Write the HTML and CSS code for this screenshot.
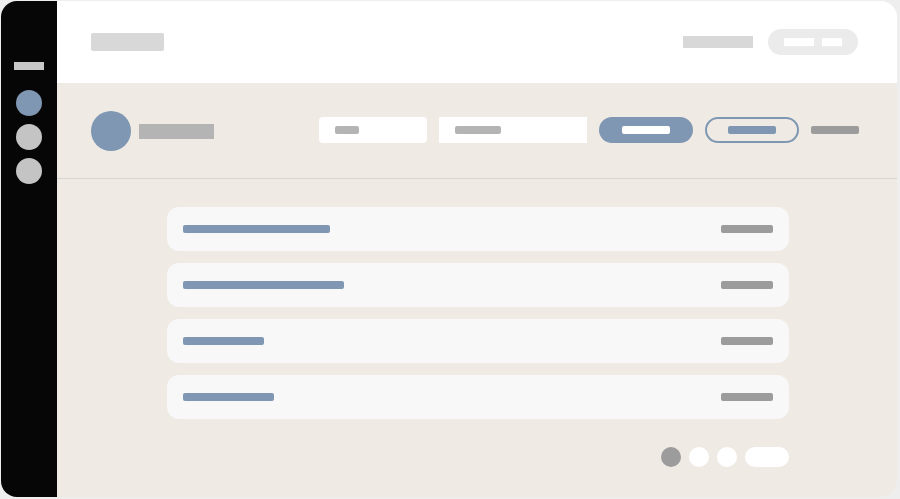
FILE: index.html
```html
<!DOCTYPE html>
<html lang="en">
<head>
  <meta charset="UTF-8">
  <meta name="viewport" content="width=device-width, initial-scale=1.0">
  <title>List Wireframe</title>
  <link rel="stylesheet" href="styles.css">
</head>
<body>
  <div class="frame">
    <!-- Left rail -->
    <nav class="sidebar">
      <div class="sidebar-mark"></div>
      <div class="nav-dots">
        <span class="nav-dot active"></span>
        <span class="nav-dot"></span>
        <span class="nav-dot"></span>
      </div>
    </nav>

    <div class="main">
      <header class="topbar">
        <div class="logo-block"></div>
        <div class="topbar-right">
          <div class="top-link"></div>
          <div class="account-pill">
            <span class="pill-bar wide"></span>
            <span class="pill-bar"></span>
          </div>
        </div>
      </header>

      <section class="toolbar">
        <div class="profile">
          <div class="avatar"></div>
          <div class="profile-name"></div>
        </div>
        <div class="controls">
          <div class="field small"><span class="ph short"></span></div>
          <div class="field large"><span class="ph"></span></div>
          <button class="btn primary" type="button"><span class="btn-bar"></span></button>
          <button class="btn outline" type="button"><span class="btn-bar"></span></button>
          <div class="ctrl-link"></div>
        </div>
      </section>

      <section class="content">
        <div class="list" id="list"></div>
        <div class="pager">
          <span class="page-dot current"></span>
          <span class="page-dot"></span>
          <span class="page-dot"></span>
          <span class="page-next"></span>
        </div>
      </section>
    </div>
  </div>

  <script>
    // title bar widths for each row
    const rows = [147, 161, 81, 91];
    const list = document.getElementById("list");
    rows.forEach((w) => {
      const row = document.createElement("div");
      row.className = "list-row";
      const title = document.createElement("span");
      title.className = "row-title";
      title.style.width = w + "px";
      const meta = document.createElement("span");
      meta.className = "row-meta";
      row.appendChild(title);
      row.appendChild(meta);
      list.appendChild(row);
    });
  </script>
</body>
</html>
```

FILE: styles.css
```css
* {
  box-sizing: border-box;
}

body {
  margin: 0;
  background-color: #eeeeee;
  font-family: 'Liberation Sans', Arial, sans-serif;
}

.frame {
  display: flex;
  width: 896px;
  height: 496px;
  margin: 1px 0 0 1px;
  border-radius: 16px;
  overflow: hidden;
  background-color: #efebe4;
}

/* sidebar */
.sidebar {
  width: 56px;
  flex-shrink: 0;
  background-color: #060606;
  display: flex;
  flex-direction: column;
  align-items: center;
  padding-top: 61px;
}

.sidebar-mark {
  width: 30px;
  height: 8px;
  background-color: #c8c8c8;
}

.nav-dots {
  display: flex;
  flex-direction: column;
  gap: 8px;
  margin-top: 20px;
}

.nav-dot {
  display: block;
  width: 26px;
  height: 26px;
  border-radius: 50%;
  background-color: #c4c4c4;
}

.nav-dot.active {
  background-color: #7f97b2;
}

/* main column */
.main {
  flex: 1;
  display: flex;
  flex-direction: column;
}

.topbar {
  height: 82px;
  background-color: #ffffff;
  display: flex;
  align-items: center;
  justify-content: space-between;
  padding: 0 39px 0 34px;
}

.logo-block {
  width: 73px;
  height: 18px;
  border-radius: 2px;
  background-color: #d8d8d8;
}

.topbar-right {
  display: flex;
  align-items: center;
  gap: 15px;
}

.top-link {
  width: 70px;
  height: 12px;
  background-color: #d8d8d8;
}

.account-pill {
  display: flex;
  align-items: center;
  gap: 8px;
  height: 26px;
  padding: 0 16px;
  border-radius: 13px;
  background-color: #ebebeb;
}

.pill-bar {
  width: 20px;
  height: 8px;
  background-color: #ffffff;
}

.pill-bar.wide {
  width: 30px;
}

/* toolbar */
.toolbar {
  height: 96px;
  display: flex;
  align-items: center;
  justify-content: space-between;
  padding: 0 38px 1px 34px;
  border-bottom: 1px solid #d6d6d6;
}

.profile {
  display: flex;
  align-items: center;
  gap: 8px;
  margin-top: 2px;
}

.avatar {
  width: 40px;
  height: 40px;
  border-radius: 50%;
  background-color: #7f97b2;
}

.profile-name {
  width: 75px;
  height: 15px;
  background-color: #b4b4b4;
}

.controls {
  display: flex;
  align-items: center;
  gap: 12px;
}

.field {
  height: 26px;
  background-color: #ffffff;
  display: flex;
  align-items: center;
  padding-left: 16px;
}

.field.small {
  width: 108px;
  border-radius: 4px;
}

.field.large {
  width: 148px;
}

.ph {
  width: 46px;
  height: 8px;
  border-radius: 2px;
  background-color: #b4b4b4;
}

.ph.short {
  width: 24px;
}

.btn {
  width: 94px;
  height: 26px;
  border-radius: 13px;
  display: flex;
  align-items: center;
  justify-content: center;
  padding: 0;
  cursor: pointer;
}

.btn.primary {
  background-color: #7f97b2;
  border: none;
}

.btn.outline {
  background-color: transparent;
  border: 2px solid #7f97b2;
}

.btn-bar {
  width: 48px;
  height: 8px;
  border-radius: 2px;
}

.primary .btn-bar {
  background-color: #ffffff;
}

.outline .btn-bar {
  background-color: #7f97b2;
}

.ctrl-link {
  width: 48px;
  height: 8px;
  border-radius: 2px;
  background-color: #9c9c9c;
}

/* list */
.content {
  padding-top: 28px;
  width: 622px;
  margin-left: 110px;
}

.list {
  display: flex;
  flex-direction: column;
  gap: 12px;
}

.list-row {
  height: 44px;
  display: flex;
  align-items: center;
  justify-content: space-between;
  padding: 0 16px;
  border-radius: 12px;
  background-color: #f8f8f8;
}

.row-title {
  height: 8px;
  border-radius: 2px;
  background-color: #7f97b2;
}

.row-meta {
  width: 52px;
  height: 8px;
  border-radius: 2px;
  background-color: #9c9c9c;
}

.pager {
  display: flex;
  justify-content: flex-end;
  gap: 8px;
  margin-top: 28px;
}

.page-dot {
  width: 20px;
  height: 20px;
  border-radius: 50%;
  background-color: #ffffff;
}

.page-dot.current {
  background-color: #9c9c9c;
}

.page-next {
  width: 44px;
  height: 20px;
  border-radius: 10px;
  background-color: #ffffff;
}
```
